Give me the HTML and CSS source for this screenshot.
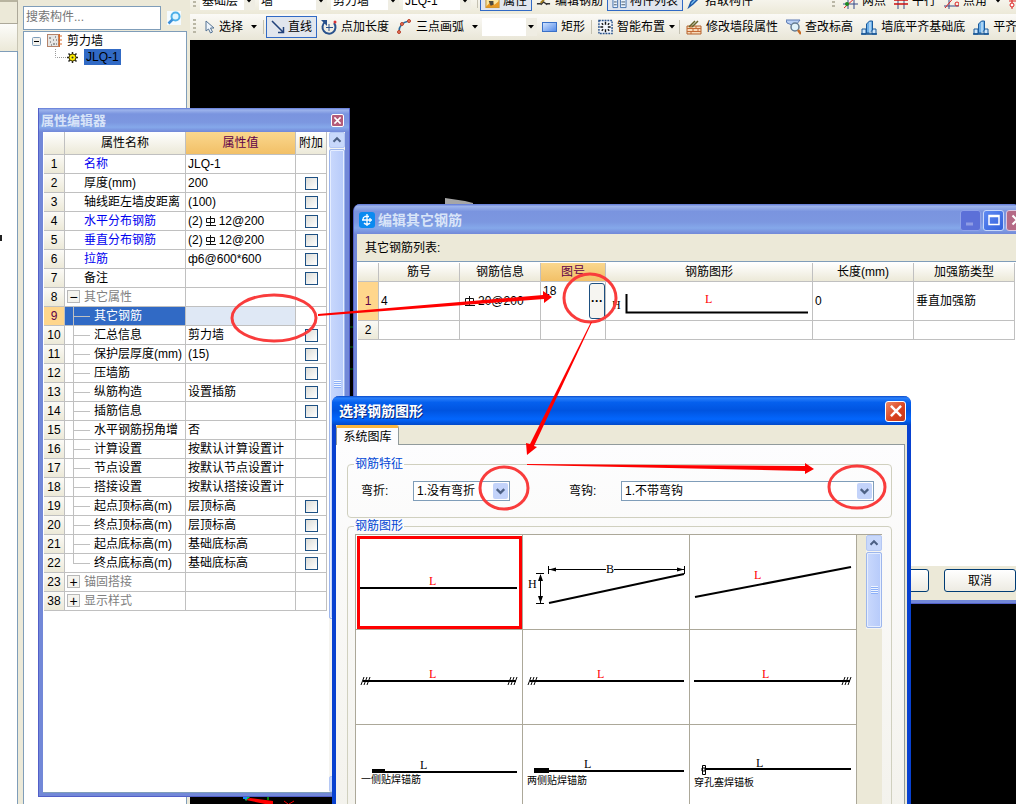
FILE: index.html
```html
<!DOCTYPE html>
<html lang="zh-CN">
<head>
<meta charset="utf-8">
<title>编辑其它钢筋</title>
<link rel="stylesheet" href="styles.css">
</head>
<body>
<svg class="defs" aria-hidden="true">
  <symbol id="up" viewBox="0 0 16 16"><path d="M4 10l4-4 4 4" fill="none" stroke="#4d6185" stroke-width="2.4"/></symbol>
  <symbol id="down" viewBox="0 0 16 16"><path d="M4 6l4 4 4-4" fill="none" stroke="#4d6185" stroke-width="2.4"/></symbol>
  <symbol id="tri" viewBox="0 0 6 4"><path d="M0 0h6L3 3.5z" fill="#000"/></symbol>
  <symbol id="cross" viewBox="0 0 16 16"><path d="M3.5 3.5l9 9m0-9l-9 9" stroke="#fff" stroke-width="2.2"/></symbol>
  <symbol id="rebar" viewBox="0 0 12 12"><path d="M5.500 1v10M1 10.500h10M1.500 3.500h8v4h-8z" fill="none" stroke="#111" stroke-width="1"/></symbol>
  <symbol id="align" viewBox="0 0 16 16"><path d="M1 10h4v5H1zM11 10h4v5h-4z" fill="#cfe6fa" stroke="#1a5a9c"/><path d="M5.500 5l3-3h3v9l-3 3h-3z" fill="#6fb0e8" stroke="#1a5a9c"/><path d="M0 15h16" stroke="#0f4f90" stroke-width="1.500"/><path d="M9 3v11" stroke="#e8f6ff"/></symbol>
</svg>
<main class="app">
  <aside class="sliver"><div class="sliver-top"></div><div class="sliver-tab"></div><div class="sliver-body"><i></i></div></aside>
  <aside class="explorer">
    <div class="search">
      <input type="text" placeholder="搜索构件..." aria-label="搜索构件">
      <button type="button" aria-label="搜索"><svg width="14" height="14" viewBox="0 0 14 14"><rect width="14" height="14" fill="#f4fbff"/><circle cx="8.500" cy="5.500" r="4" fill="#e0f5ff" stroke="#4fb0e8" stroke-width="2"/><path d="M5.500 8.500L1.500 12.500" stroke="#3c8fd8" stroke-width="2.500"/></svg></button>
    </div>
    <div class="tree">
      <div class="tree-row">
        <svg width="9" height="9" viewBox="0 0 9 9"><rect x=".5" y=".5" width="8" height="8" rx="1" fill="#f3f2ee" stroke="#7f9db9"/><path d="M2 4.500h5" stroke="#000"/></svg>
        <svg width="15" height="14" viewBox="0 0 15 14"><rect x=".5" y=".5" width="11" height="12" fill="#e7e6e4" stroke="#b5836a"/><path d="M2 4h2m2 2h1m1-3h1M3 8h1m2 2h2M9 6h1M4 11h1m4-1h1" stroke="#555"/><path d="M12.500 0v13M11 2h4m-4 4h4m-4 4h4" stroke="#d86b2a"/></svg>
        <span>剪力墙</span>
      </div>
      <div class="tree-row leaf">
        <svg class="elbow" width="12" height="16" viewBox="0 0 12 16"><path d="M.5 0v8.500H12" fill="none" stroke="#999" stroke-dasharray="1 1"/></svg>
        <svg width="11" height="11" viewBox="0 0 11 11"><path d="M5.500 0v11M0 5.500h11M1.500 1.500l8 8m0-8l-8 8" stroke="#222" stroke-width="1.500"/><circle cx="5.500" cy="5.500" r="3.500" fill="#ffee00" stroke="#443c00"/><circle cx="5.500" cy="5.500" r="1" fill="#333"/></svg>
        <span class="picked">JLQ-1</span>
      </div>
    </div>
  </aside>
  <section class="work">
    <nav class="bar bar-top">
      <i class="grip"></i>
      <button class="combo c1" type="button">基础层<svg width="6" height="4"><use href="#tri"/></svg></button>
      <button class="combo c2" type="button">墙<svg width="6" height="4"><use href="#tri"/></svg></button>
      <button class="combo c2" type="button">剪力墙<svg width="6" height="4"><use href="#tri"/></svg></button>
      <button class="combo c2" type="button">JLQ-1<svg width="6" height="4"><use href="#tri"/></svg></button>
      <i class="sep"></i>
      <button class="tool on" type="button"><svg width="15" height="16" viewBox="0 0 16 16"><rect x="1" y="1" width="14" height="14" fill="#fbe7a0" stroke="#b98c2c"/><path d="M1 14l6-6 3 4 5-4v7H1z" fill="#e79a24"/><path d="M4 8h5v4l-3 1z" fill="#4a4a40"/></svg>属性</button>
      <button class="tool" type="button"><svg width="15" height="16" viewBox="0 0 16 16"><path d="M1 11h4m6 0h4M5 12l3-3 4 3" stroke="#333" stroke-width="1.500" fill="none"/><path d="M5 10l6-6" stroke="#a58020" stroke-width="2"/></svg>编辑钢筋</button>
      <button class="tool on" type="button"><svg width="15" height="16" viewBox="0 0 16 16"><path d="M1 1h5v14H1zM9 1h6v14H9z" fill="#e8f2fd" stroke="#4270ac"/><path d="M2 5h3M2 9h3M2 12h3m5-7h4m-4 4h4m-4 3h4" stroke="#456"/></svg>构件列表</button>
      <button class="tool" type="button"><svg width="14" height="16" viewBox="0 0 14 16"><path d="M2 14l2-5 6-6 2 2-6 6z" fill="#7cc1f2" stroke="#1b58a8" stroke-width="1.500"/></svg>拾取构件</button>
      <i class="gap"></i>
      <i class="grip"></i>
      <button class="tool" type="button"><svg width="15" height="16" viewBox="0 0 15 16"><path d="M0 11h15M5 0v16M11 0v16" stroke="#364a88"/><path d="M1 15L13 4" stroke="#d22"/><circle cx="4" cy="11" r="2" fill="#1b8a20"/></svg>两点</button>
      <button class="tool" type="button"><svg width="14" height="16" viewBox="0 0 14 16"><path d="M4 0v16M10 0v16" stroke="#364a88"/><path d="M0 7h14M0 11h14" stroke="#c11" stroke-width="1.500"/></svg>平行</button>
      <button class="tool" type="button"><svg width="15" height="16" viewBox="0 0 15 16"><path d="M0 13h15M5 0v16" stroke="#364a88"/><path d="M1 15L11 3" stroke="#d22"/><circle cx="13" cy="11" r="2" fill="none" stroke="#d22"/></svg>点角<svg class="tri" width="6" height="4"><use href="#tri"/></svg></button>
      <button class="tool" type="button" aria-label="轴线"><svg width="15" height="16" viewBox="0 0 15 16"><path d="M3 0v16M0 8h15M10 0v16" stroke="#d22"/><circle cx="3" cy="12" r="2" fill="#fff" stroke="#d22"/></svg></button>
    </nav>
    <nav class="bar">
      <i class="grip"></i>
      <button class="tool" type="button"><svg width="11" height="14" viewBox="0 0 11 14"><path d="M2 1v10l2.500-2 2 4 2-1-2-4H10z" fill="#eef4fb" stroke="#557394"/></svg>选择<svg class="tri" width="6" height="4"><use href="#tri"/></svg></button>
      <i class="sep"></i>
      <button class="tool on" type="button"><svg width="14" height="14" viewBox="0 0 14 14"><path d="M1 1l11 11M12.500 7v5.500H7" stroke="#21427c" stroke-width="1.500" fill="none"/></svg>直线</button>
      <button class="tool" type="button"><svg width="16" height="16" viewBox="0 0 16 16"><path d="M4 3a6.500 6.500 0 1 0 9 1" fill="none" stroke="#28518c" stroke-width="2"/><path d="M0 1h6v6z" fill="#28518c"/><path d="M8 5v7M5 8.500h7" stroke="#28518c"/><circle cx="14" cy="3" r="1.500" fill="#d33"/></svg>点加长度</button>
      <button class="tool" type="button"><svg width="15" height="16" viewBox="0 0 15 16"><path d="M2 13C2 6 6 3 12 2" fill="none" stroke="#28689c" stroke-width="1.500"/><g fill="#e87858" stroke="#b8402c"><circle cx="2" cy="13" r="1.500"/><circle cx="5" cy="5" r="1.500"/><circle cx="12" cy="2" r="1.500"/></g></svg>三点画弧<svg class="tri" width="6" height="4"><use href="#tri"/></svg></button>
      <button class="combo c1 blank" type="button" aria-label="参数"><svg width="6" height="4"><use href="#tri"/></svg></button>
      <button class="tool" type="button"><svg width="15" height="14" viewBox="0 0 15 14"><defs><linearGradient id="bl" x2="1" y2="1"><stop stop-color="#d5e6ff"/><stop offset="1" stop-color="#4f87e8"/></linearGradient></defs><rect x=".5" y="2.500" width="14" height="9" fill="url(#bl)" stroke="#3970c8"/></svg>矩形</button>
      <i class="sep"></i>
      <button class="tool near" type="button"><svg width="15" height="16" viewBox="0 0 16 16"><rect x="1" y="1" width="14" height="14" fill="#f2f6fc" stroke="#27518c" stroke-width="1.500" stroke-dasharray="2 1"/><path d="M8 2.500v3M8 10.500v3M2.500 8h3M10.500 8h3M4 4l1.500 1.500M12 4l-1.500 1.500M4 12l1.500-1.500M12 12l-1.500-1.500" stroke="#111" stroke-width="1.500"/></svg>智能布置<svg class="tri" width="6" height="4"><use href="#tri"/></svg></button>
      <i class="sep"></i>
      <button class="tool" type="button"><svg width="16" height="16" viewBox="0 0 16 16"><path d="M1 7h14v8H1z" fill="#f7d9b8" stroke="#b4622c"/><path d="M1 9.500h14M1 12.500h14M5 7v3m5-3v3m-3 0v3m5-3v3m-7 0v2" stroke="#c46a35"/><path d="M3 8l6-6M6 8l6-6" stroke="#66642b" stroke-width="1.500"/></svg>修改墙段属性</button>
      <button class="tool" type="button"><svg width="15" height="16" viewBox="0 0 15 16"><path d="M0 1h14l-4 5v5H6V6L1 4z" fill="#b8d0f4" stroke="#5c7ab4"/><circle cx="9" cy="8" r="4" fill="#e1f2fa" stroke="#657c92" stroke-width="1.500"/><path d="M12 11l3 4" stroke="#c66b24" stroke-width="2.500"/></svg>查改标高</button>
      <button class="tool" type="button"><svg width="16" height="16"><use href="#align"/></svg>墙底平齐基础底</button>
      <button class="tool" type="button"><svg width="16" height="16"><use href="#align"/></svg>平齐</button>
    </nav>
    <div class="scene"></div>
  </section>
</main>

<svg class="scraps" width="100%" height="100%" aria-hidden="true">
  <path d="M445 198l20 3 8 2v2h-28z" fill="#a6a6a6"/>
  <path d="M350 327h4M350 347h4M350 369h4" stroke="#006a10"/>
  <path d="M243 797h7l-4 4z" fill="#00d050"/><path d="M243 797h4v2h-4z" fill="#1a80ff"/>
  <path d="M246 800l4-2 23 3v3h-8z" fill="#f00"/><path d="M268 797v3" stroke="#0f0"/>
  <path d="M284 801l4 3M294 801l-5 3" stroke="#f00"/>
</svg>

<section class="win props">
  <header class="caption soft"><h2>属性编辑器</h2><button class="x small" type="button" aria-label="关闭"><svg width="11" height="11"><use href="#cross"/></svg></button></header>
  <div class="props-body">
    <table class="grid">
      <colgroup><col class="w-num"><col class="w-name"><col><col class="w-add"></colgroup>
      <thead><tr><th></th><th>属性名称</th><th class="hot">属性值</th><th>附加</th></tr></thead>
      <tbody>
      <tr><th>1</th><td class="n blue">名称</td><td>JLQ-1</td><td></td></tr>
      <tr><th>2</th><td class="n">厚度(mm)</td><td>200</td><td><input type="checkbox" aria-label="厚度附加"></td></tr>
      <tr><th>3</th><td class="n">轴线距左墙皮距离</td><td>(100)</td><td><input type="checkbox" aria-label="轴线距附加"></td></tr>
      <tr><th>4</th><td class="n blue">水平分布钢筋</td><td>(2)<svg class="rb" width="12" height="12"><use href="#rebar"/></svg>12@200</td><td><input type="checkbox" aria-label="水平分布钢筋附加"></td></tr>
      <tr><th>5</th><td class="n blue">垂直分布钢筋</td><td>(2)<svg class="rb" width="12" height="12"><use href="#rebar"/></svg>12@200</td><td><input type="checkbox" aria-label="垂直分布钢筋附加"></td></tr>
      <tr><th>6</th><td class="n blue">拉筋</td><td>ф6@600*600</td><td><input type="checkbox" aria-label="拉筋附加"></td></tr>
      <tr><th>7</th><td class="n">备注</td><td></td><td><input type="checkbox" aria-label="备注附加"></td></tr>
      <tr><th>8</th><td class="g"><button type="button" class="fold">−</button>其它属性</td><td></td><td></td></tr>
      <tr class="sel"><th>9</th><td class="k">其它钢筋</td><td></td><td></td></tr>
      <tr><th>10</th><td class="k">汇总信息</td><td>剪力墙</td><td><input type="checkbox" aria-label="汇总信息附加"></td></tr>
      <tr><th>11</th><td class="k">保护层厚度(mm)</td><td>(15)</td><td><input type="checkbox" aria-label="保护层厚度附加"></td></tr>
      <tr><th>12</th><td class="k">压墙筋</td><td></td><td><input type="checkbox" aria-label="压墙筋附加"></td></tr>
      <tr><th>13</th><td class="k">纵筋构造</td><td>设置插筋</td><td><input type="checkbox" aria-label="纵筋构造附加"></td></tr>
      <tr><th>14</th><td class="k">插筋信息</td><td></td><td><input type="checkbox" aria-label="插筋信息附加"></td></tr>
      <tr><th>15</th><td class="k">水平钢筋拐角增</td><td>否</td><td></td></tr>
      <tr><th>16</th><td class="k">计算设置</td><td>按默认计算设置计</td><td></td></tr>
      <tr><th>17</th><td class="k">节点设置</td><td>按默认节点设置计</td><td></td></tr>
      <tr><th>18</th><td class="k">搭接设置</td><td>按默认搭接设置计</td><td></td></tr>
      <tr><th>19</th><td class="k">起点顶标高(m)</td><td>层顶标高</td><td><input type="checkbox" aria-label="起点顶标高附加"></td></tr>
      <tr><th>20</th><td class="k">终点顶标高(m)</td><td>层顶标高</td><td><input type="checkbox" aria-label="终点顶标高附加"></td></tr>
      <tr><th>21</th><td class="k">起点底标高(m)</td><td>基础底标高</td><td><input type="checkbox" aria-label="起点底标高附加"></td></tr>
      <tr><th>22</th><td class="k last">终点底标高(m)</td><td>基础底标高</td><td><input type="checkbox" aria-label="终点底标高附加"></td></tr>
      <tr><th>23</th><td class="g"><button type="button" class="fold">+</button>锚固搭接</td><td></td><td></td></tr>
      <tr><th>38</th><td class="g"><button type="button" class="fold">+</button>显示样式</td><td></td><td></td></tr>
      </tbody>
    </table>
    <div class="scroll"><button type="button" aria-label="向上"><svg width="14" height="14"><use href="#up"/></svg></button><div class="track"><div class="thumb"><i></i></div></div><button type="button" aria-label="向下"><svg width="14" height="14"><use href="#down"/></svg></button></div>
  </div>
</section>

<section class="win edit">
  <header class="caption soft">
    <svg width="16" height="16" viewBox="0 0 16 16"><rect width="16" height="16" rx="3" fill="#0a8af0"/><path d="M8 2v12M3 8h10M11 6v4M5 11a4 4 0 0 0 6 0M10 4.500H6a3 3 0 0 0-2 3" fill="none" stroke="#fff" stroke-width="1.300"/></svg>
    <h2>编辑其它钢筋</h2>
    <button class="x mute" type="button" aria-label="最小化"><svg width="16" height="16" viewBox="0 0 16 16"><path d="M3 12h7" stroke="#8f9ce4" stroke-width="3"/></svg></button>
    <button class="x max" type="button" aria-label="最大化"><svg width="16" height="16" viewBox="0 0 16 16"><path d="M3 3.500h10v9H3zM3 4.500h10" fill="none" stroke="#fff" stroke-width="1.500"/></svg></button>
    <button class="x mauve" type="button" aria-label="关闭"><svg width="16" height="16"><use href="#cross"/></svg></button>
  </header>
  <div class="edit-body">
    <p>其它钢筋列表:</p>
    <div class="sheet">
      <table class="grid">
        <colgroup><col class="w-num"><col class="w-81"><col class="w-81"><col class="w-65"><col><col class="w-101"><col class="w-101"></colgroup>
        <thead><tr><th></th><th>筋号</th><th>钢筋信息</th><th class="hot">图号</th><th>钢筋图形</th><th>长度(mm)</th><th>加强筋类型</th></tr></thead>
        <tbody>
          <tr class="big cur"><th>1</th><td>4</td><td><svg class="rb" width="12" height="12"><use href="#rebar"/></svg>20@200</td><td class="pick"><div><span>18</span><button type="button" aria-label="选择图形">···</button></div></td>
          <td><svg class="shape" width="100%" height="37" viewBox="0 0 204 37"><path d="M19.500 11v18.500H201" fill="none" stroke="#000" stroke-width="2"/><text x="5" y="26">H</text><text class="r" x="98" y="20">L</text></svg></td><td>0</td><td>垂直加强筋</td></tr>
          <tr><th>2</th><td></td><td></td><td></td><td></td><td></td><td></td></tr>
        </tbody>
      </table>
    </div>
    <footer><button class="btn" type="button" aria-label="确定"></button><button class="btn" type="button">取消</button></footer>
  </div>
</section>

<section class="win choose">
  <header class="caption vivid"><h2>选择钢筋图形</h2><button class="x red" type="button" aria-label="关闭"><svg width="18" height="18"><use href="#cross"/></svg></button></header>
  <div class="tabs"><button type="button">系统图库</button></div>
  <div class="page">
    <fieldset class="feat"><legend>钢筋特征</legend>
      <label for="bend">弯折:</label><span class="drop d1"><select id="bend"><option>1.没有弯折</option></select><svg width="15" height="16"><use href="#down"/></svg></span>
      <label for="hook" class="second">弯钩:</label><span class="drop d2"><select id="hook"><option>1.不带弯钩</option></select><svg width="15" height="16"><use href="#down"/></svg></span>
    </fieldset>
    <fieldset class="figs"><legend>钢筋图形</legend>
      <div class="gallery">
        <div class="cells">
          <div class="cell active"><svg viewBox="0 0 166 94"><path d="M4 53h157" class="b"/><text class="r" x="73" y="50">L</text></svg></div>
          <div class="cell"><svg viewBox="0 0 166 94"><path d="M26 68L161 39" class="b"/><path d="M25.500 31v8M161.500 31v8M26 34.500h57M91 34.500h70M13 38.500h8M13 68.500h8M17.500 40v28" class="t"/><path d="M26 34.500l7-2v4zM161 34.500l-7-2v4zM17.500 39l-2.500 7h5zM17.500 68l-2.500-7h5z"/><text x="83" y="38">B</text><text x="5" y="53">H</text></svg></div>
          <div class="cell"><svg viewBox="0 0 166 94"><path d="M5 62L161 32" class="b"/><text class="r" x="64" y="44">L</text></svg></div>
          <div class="cell"><svg viewBox="0 0 166 94"><path d="M7 51h153" class="b"/><path d="M5 55l3-8m0 8l3-8m0 8l3-8M152 55l3-8m0 8l3-8m0 8l3-8" class="t"/><text class="r" x="73" y="48">L</text></svg></div>
          <div class="cell"><svg viewBox="0 0 166 94"><path d="M7 51h154" class="b"/><path d="M5 55l3-8m0 8l3-8m0 8l3-8" class="t"/><text class="r" x="74" y="48">L</text></svg></div>
          <div class="cell"><svg viewBox="0 0 166 94"><path d="M4 51h156" class="b"/><path d="M152 55l3-8m0 8l3-8m0 8l3-8" class="t"/><text class="r" x="72" y="48">L</text></svg></div>
          <div class="cell"><svg viewBox="0 0 166 94"><path d="M16 47h145" class="b"/><path d="M16 44h13v4H16z"/><text x="64" y="44">L</text><text class="s" x="5" y="58">一侧贴焊锚筋</text></svg></div>
          <div class="cell"><svg viewBox="0 0 166 94"><path d="M11 46h150" class="b"/><path d="M11 43h15v5H11z"/><text x="61" y="43">L</text><text class="s" x="4" y="59">两侧贴焊锚筋</text></svg></div>
          <div class="cell"><svg viewBox="0 0 166 94"><path d="M15 44h146" class="b"/><path d="M12.500 40.500h3v9h-3zM12 43h3v3h-3z" class="t"/><text x="66" y="42">L</text><text class="s" x="4" y="61">穿孔塞焊锚板</text></svg></div>
        </div>
        <div class="scroll"><button type="button" aria-label="向上"><svg width="14" height="14"><use href="#up"/></svg></button><div class="track"><div class="thumb"><i></i></div></div></div>
      </div>
    </fieldset>
  </div>
</section>

<svg class="marks" width="100%" height="100%" aria-hidden="true">
  <g fill="none" stroke="#f93c3c" stroke-width="3">
    <ellipse cx="274" cy="318" rx="42" ry="23"/><ellipse cx="590" cy="298" rx="26" ry="24"/><ellipse cx="504" cy="488" rx="24" ry="21"/><ellipse cx="857" cy="487" rx="28" ry="21"/>
  </g>
  <g fill="#f00">
    <path d="M318 314l225-19v-4l9 6-8 6v-4L318 316z"/>
    <path d="M591 322h1l-58 124 3 1-10 8-1-12 4 1z"/>
    <path d="M527 464l278 2v-3l9 6-9 5v-3l-278-6z"/>
  </g>
</svg>
</body>
</html>
```
FILE: styles.css
```css
* { box-sizing: border-box; }
body { margin: 0; height: 100vh; overflow: hidden; position: relative; background: #000; color: #000; font: 12px/16px "Liberation Sans", "Noto Sans CJK SC", sans-serif; }
button, input, select { font: inherit; color: inherit; margin: 0; }
button { padding: 0; border: 0; background: none; white-space: nowrap; }
h2, p, fieldset { margin: 0; padding: 0; }
svg { display: block; flex: none; }
.defs { position: absolute; width: 0; height: 0; }
.app { display: grid; grid-template-columns: 18px 172px minmax(0, 1fr); height: 100%; background: #ece9d8; }

.sliver { display: flex; flex-direction: column; }
.sliver-top { height: 24px; border-top: 2px solid #b8b4a0; border-right: 1px solid #aca899; border-bottom: 1px solid #aca899; }
.sliver-tab { height: 27px; background: linear-gradient(#fcfcfa, #ece9d8); border-right: 1px solid #c8c5b4; }
.sliver-body { flex: 1; background: #fff; border: solid #7f9db9; border-width: 1px 1px 0 0; }
.sliver-body i { display: block; width: 2px; height: 6px; margin-top: 183px; background: #222; }

.explorer { display: flex; flex-direction: column; padding: 6px 3px 0 5px; }
.search { display: flex; height: 24px; }
.search input { flex: 1; min-width: 0; border: 1px solid #7f9db9; background: #fff; padding: 0 2px 3px; outline: 0; }
.search input::placeholder { color: #757575; opacity: 1; }
.search button { width: 26px; display: grid; place-items: center; }
.tree { flex: 1; margin-top: 1px; border: 1px solid #7f9db9; border-bottom: 0; background: #fff; padding: 1px 8px; }
.tree-row { display: flex; align-items: center; height: 16px; gap: 6px; }
.tree-row svg + svg { margin-right: -1px; }
.tree-row.leaf { gap: 0; margin-left: 23px; }
.tree-row.leaf .picked { margin-left: 7px; }
.picked { flex: none; width: 37px; height: 16px; padding-left: 2px; background: #316ac5; }

.work { display: flex; flex-direction: column; min-width: 0; }
.bar { display: flex; align-items: center; height: 26px; overflow: hidden; background: linear-gradient(#fbfaf7, #e9e6d7); }
.bar-top { height: 28px; margin-top: -14px; padding-top: 2px; background: linear-gradient(#fff, #ece9d8); }
.bar > * { flex: none; }
.grip { width: 3px; height: 16px; margin: 0 4px 0 3px; background: repeating-linear-gradient(#bab7a6 0 2px, transparent 2px 4px); }
.sep { width: 1px; height: 14px; margin: 0 2px; background: #c5c2b2; }
.tool { display: flex; align-items: center; gap: 4px; height: 22px; padding: 0 4px; }
.bar-top .tool { height: 20px; }
.tool.on { gap: 3px; border: 1px solid #316ac5; background: #e1e6ee; }
.tool .tri { margin-left: 4px; }
.tool.near { padding-right: 2px; }
.tool.near .tri { margin-left: 0; }
.combo { display: flex; align-items: center; justify-content: space-between; height: 18px; padding: 0 3px 0 2px; background: linear-gradient(90deg, #fff calc(100% - 11px), #efede3 calc(100% - 11px)); margin-right: 4px; }
.combo.blank { margin-right: 1px; }
.combo svg { margin-left: auto; }
.c1 { width: 55px; }
.c2 { width: 68px; }
.gap { width: 72px; }
.scene { flex: 1; background: #000; }

.scraps, .marks { position: absolute; left: 0; top: 0; pointer-events: none; }

.win { position: absolute; display: flex; flex-direction: column; }
.caption { display: flex; align-items: center; flex: none; }
.caption h2 { flex: 1; font-size: 14px; line-height: 18px; font-weight: bold; }
.soft { color: #d8e4f8; background: linear-gradient(#5f78d6, #9db4ec 8%, #7a94df 25%, #7c97e0 60%, #85a8ea 80%, #7288d8); }
.x { display: grid; place-items: center; width: 21px; height: 21px; border: 1px solid #fff; border-radius: 3px; }
.x.small { width: 13px; height: 13px; background: #b45a78; border-radius: 2px; }
.x.mute { background: #5c70d8; border-color: #8fa2ea; }
.x.max { background: linear-gradient(135deg, #5f8af2, #3160dc); border-color: #c8d8fa; }
.x.mauve { background: #b56a86; border-color: #dcc8e0; }
.x.red { background: linear-gradient(135deg, #f08a68, #d8401c 60%, #c43a1c); }

.grid { width: 100%; table-layout: fixed; border-spacing: 0; }
.grid th, .grid td { height: 19px; padding: 0 0 0 2px; border: solid #c0c0c0; border-width: 0 1px 1px 0; font-weight: normal; text-align: left; white-space: nowrap; overflow: hidden; }
.grid thead th { text-align: center; padding: 0; background: linear-gradient(#fff, #ece9d8); }
.grid tbody th { text-align: center; padding: 0; background: linear-gradient(#fbfaf6, #ece9d8); }
.grid thead th.hot { background: linear-gradient(#fad78e, #f2c067); color: #600048; }
.w-num { width: 21px; }
.w-name { width: 121px; }
.w-add { width: 31px; }
.w-81 { width: 81px; }
.w-65 { width: 65px; }
.w-101 { width: 101px; }
.rb { display: inline-block; vertical-align: -2px; margin: 0 2px; }

.props { left: 38px; top: 108px; bottom: 7px; width: 312px; background: #7288d8; border: solid #525fc8; border-width: 0 1px 1px; }
.props .caption { height: 24px; padding: 1px 5px 0 2px; }
.props h2 { font-size: 13px; }
.props-body { flex: 1; min-height: 0; display: flex; justify-content: space-between; align-items: flex-start; margin: 0 4px 3px; padding-left: 1px; background: #fff; border-bottom: 1px solid #7f9db9; }
.props .grid { width: 283px; }
.props thead th { height: 23px; }
.props td { line-height: 15px; }
.props td.n { padding-left: 19px; }
.blue { color: #0000f0; }
.props td.g { color: #808080; }
.fold { width: 13px; height: 13px; margin-right: 4px; vertical-align: -1px; border: 1px solid #b8b8b8; background: #f5f4ef; color: #000; font-size: 14px; line-height: 10px; }
.props td.k { padding-left: 29px; background: linear-gradient(#c0c0c0, #c0c0c0) 8px 0 / 1px 100% no-repeat, linear-gradient(#c0c0c0, #c0c0c0) 8px 9px / 17px 1px no-repeat; }
.props td.k.last { background-size: 1px 10px, 17px 1px; }
.props .sel .k { background-color: #316ac5; color: #fff; }
.props .sel td:nth-child(3) { background: #dfe8f5; }
.sel th, .cur th { background: #ffd68c !important; color: #600048; }
.grid input { display: block; appearance: none; width: 13px; height: 13px; margin: 0 auto; border: 1px solid #1d5083; background: linear-gradient(135deg, #dcdcd7, #fff); }
.grid td:last-child:has(input) { padding: 0; }

.scroll { display: flex; flex-direction: column; width: 16px; height: 100%; background: #f5f4f0; }
.scroll button { flex: none; height: 16px; display: grid; place-items: center; border: 1px solid #b5c8f4; border-radius: 2px; background: #c8d8fb; }
.track { flex: 1; padding: 1px 0; }
.thumb { display: grid; place-items: center; height: 75%; border: 1px solid #9db6ec; border-radius: 2px; background: linear-gradient(90deg, #c9d8fc, #b6cafa); box-shadow: inset 0 0 0 1px #e6eeff; }
.thumb i { width: 7px; height: 8px; background: repeating-linear-gradient(#eef4fe 0 1px, #8cb0f8 1px 2px); }

.edit { left: 353px; top: 204px; right: -4px; height: 400px; background: #7288d8; border: solid #525fc8; border-width: 0 1px 1px; border-radius: 7px 7px 0 0; overflow: hidden; }
.edit .caption { height: 30px; margin-right: -9px; padding: 2px 1px 0 5px; gap: 2px; }
.edit .caption h2 { padding-left: 1px; }
.edit-body { flex: 1; display: flex; flex-direction: column; margin: 0 3px 3px; background: #ece9d8; }
.edit-body p { padding: 6px 8px 5px; }
.sheet { flex: 1; padding: 1px 1px 0; border-top: 1px solid #7f9db9; background: #fff; }
.edit thead th { height: 19px; }
.edit .big > * { height: 39px; }
.edit td.pick { padding: 0 0 0 2px; }
.pick div { display: flex; justify-content: space-between; height: 37px; }
.pick button { width: 16px; height: 36px; border: 1px solid #1d4f80; border-radius: 3px; background: #f6f5f1; font-weight: bold; }
.sheet td:has(.shape) { padding: 0; }
footer { display: flex; justify-content: flex-end; gap: 15px; height: 34px; padding: 3px 0 8px; }
.btn { width: 72px; border: 1px solid #003c74; border-radius: 3px; background: linear-gradient(#fff, #edebe2); }
text { font: 12px "Liberation Serif", serif; fill: #000; }
text.r { fill: #f00; }
text.s { font: 10px "Noto Sans CJK SC", sans-serif; }

.choose { left: 332px; top: 396px; bottom: -20px; width: 579px; background: #ece9d8; border: solid #0841d0; border-width: 0 4px; border-radius: 7px 7px 0 0; }
.vivid { height: 29px; margin: 0 -4px; padding: 1px 5px 0 7px; color: #fff; border-radius: 7px 7px 0 0; background: linear-gradient(#0a49c8, #2a80fa 7%, #0560ee 22%, #0054e0 50%, #0366fd 80%, #0148c8); }
.vivid h2 { text-shadow: 1px 1px #0a2a80; }
.tabs { height: 19px; flex: none; }
.tabs button { position: relative; width: 63px; height: 20px; border: 1px solid #919b9c; border-top: 3px solid #f9b43c; border-bottom: 0; border-radius: 3px 3px 0 0; background: #fcfcfe; line-height: 14px; }
.page { flex: 1; min-height: 0; display: flex; flex-direction: column; margin-right: 2px; padding: 11px 12px 0 11px; border: solid #919b9c; border-width: 1px 1px 0 0; background: linear-gradient(#fdfdfe, #f3f2ec); }
fieldset { min-width: 0; border: 1px solid #d0d0bf; border-radius: 4px; }
legend { margin-left: -1px; padding: 0 1px; color: #0046d5; }
.feat { display: flex; align-items: flex-start; flex: none; height: 62px; padding: 9px 17px 0 13px; }
.feat legend { margin-left: -7px; }
.feat label { width: 52px; line-height: 20px; }
.feat .second { margin-left: 59px; }
.drop { display: grid; height: 20px; }
.drop > * { grid-area: 1 / 1; }
.drop select { appearance: none; width: 100%; border: 1px solid #7f9db9; border-radius: 0; background: #fff; padding: 0 3px; outline: 0; }
.drop svg { justify-self: end; align-self: center; margin-right: 2px; background: #c3d3fa; border-radius: 2px; pointer-events: none; }
.d1 { width: 97px; }
.d2 { flex: 1; }
.figs { flex: 1; min-height: 0; padding: 0 9px 0 7px; overflow: hidden; }
.gallery { display: flex; justify-content: space-between; background: #ece9d8; border-top: 1px solid #aca899; }
.cells { display: grid; grid-template-columns: repeat(3, 167px); grid-auto-rows: 95px; border-left: 1px solid #aca899; }
.cell { border: solid #aca899; border-width: 0 1px 1px 0; background: #fff; }
.cell.active { outline: 3px solid #f00; outline-offset: -4px; }
.cell svg { width: 100%; height: 100%; }
.b { fill: none; stroke: #000; stroke-width: 2; }
.t { fill: none; stroke: #000; }
.gallery .thumb { height: 76px; }
```
